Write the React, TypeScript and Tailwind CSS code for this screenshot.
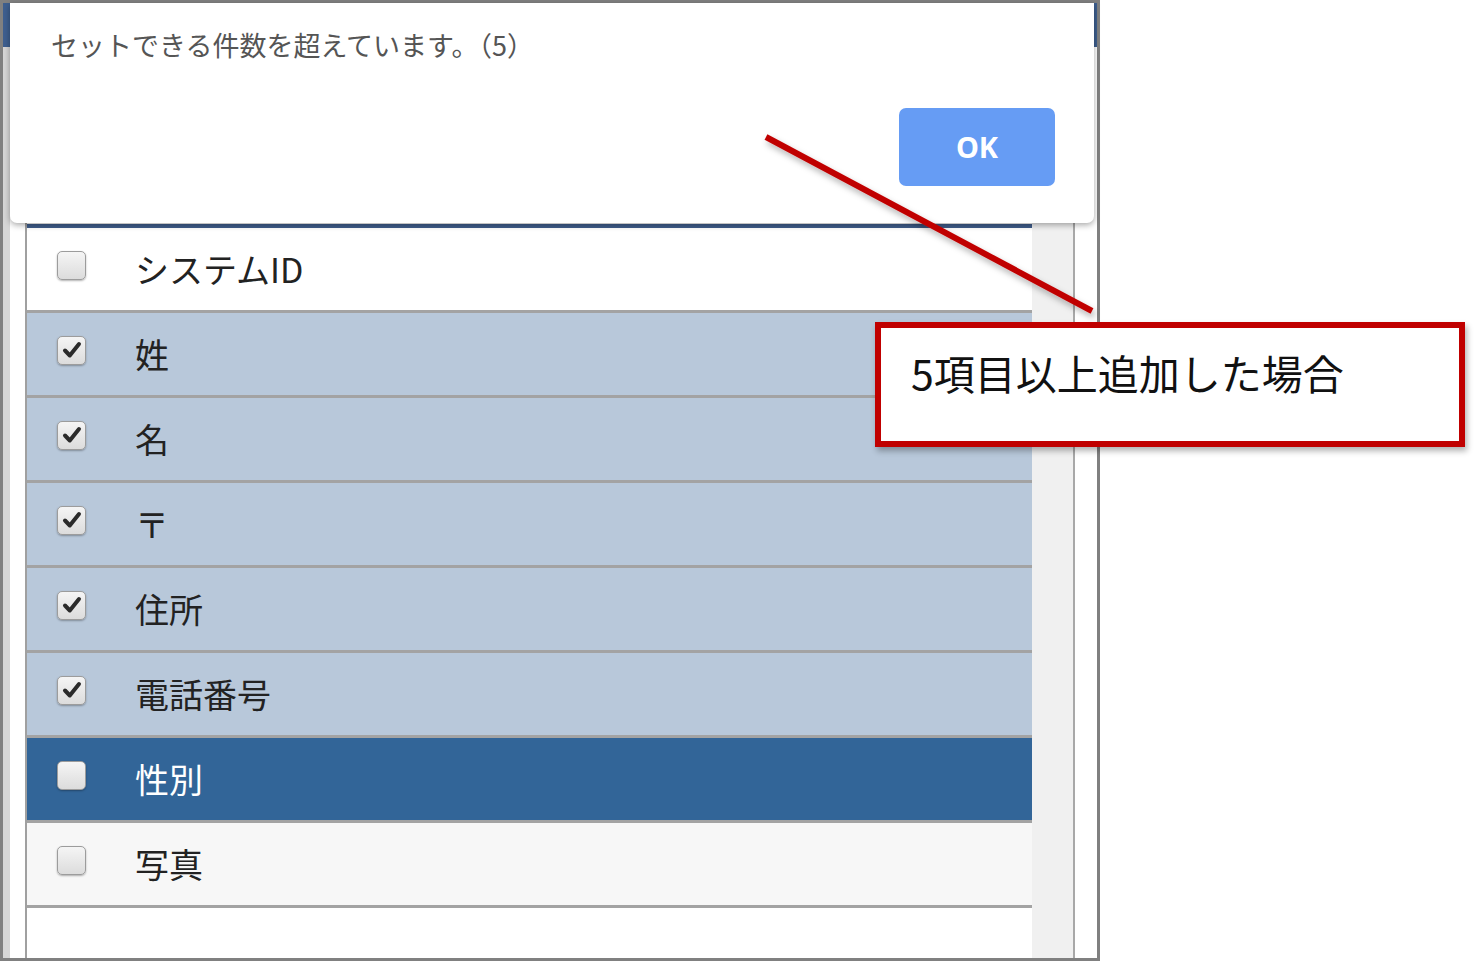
const ROWS = [
  { label: "システムID", checked: false, tone: "white" },
  { label: "姓", checked: true, tone: "picked" },
  { label: "名", checked: true, tone: "picked" },
  { label: "〒", checked: true, tone: "picked" },
  { label: "住所", checked: true, tone: "picked" },
  { label: "電話番号", checked: true, tone: "picked" },
  { label: "性別", checked: false, tone: "active" },
  { label: "写真", checked: false, tone: "plain" },
];

const jp = "font-['Meiryo','Noto_Sans_CJK_JP',sans-serif]";

function CheckBox({ checked }: { checked: boolean }) {
  return (
    <div className="w-[29px] h-[29px] rounded-[5px] border border-[#9c9c9c] bg-gradient-to-b from-[#f5f5f5] to-[#dcdcdc] shadow-[0_1px_2px_rgba(0,0,0,0.3)] flex items-center justify-center">
      {checked && (
        <svg width="22" height="22" viewBox="0 0 22 22">
          <path d="M4 11.5 L8.8 16.5 L18 5" fill="none" stroke="#2b2b2b" strokeWidth="4" strokeLinecap="round" strokeLinejoin="round" />
        </svg>
      )}
    </div>
  );
}

function Row({ label, checked, tone }: { label: string; checked: boolean; tone: string }) {
  const bg =
    tone === "white" ? "bg-white" : tone === "picked" ? "bg-[#b8c8da]" : tone === "active" ? "bg-[#326598]" : "bg-[#f7f7f7]";
  const color = tone === "active" ? "text-white" : "text-[#222]";
  return (
    <div className={`h-[85px] shrink-0 border-b-[3px] border-[#a3a3a3] flex items-center ${bg}`}>
      <div className="pl-[30px] mb-[8px]">
        <CheckBox checked={checked} />
      </div>
      <span className={`ml-[49px] text-[34px] leading-none ${color} ${jp}`}>{label}</span>
    </div>
  );
}

export default function App() {
  return (
    <div className="relative w-[1480px] h-[962px] bg-white overflow-hidden">
      {/* window frame with the list behind the dialog */}
      <div className="w-[1100px] h-[961px] border-[3px] border-[#808080] flex bg-white">
        <div className="w-[7px] bg-[#d6d6d6] flex flex-col">
          <div className="h-[44px] bg-[#3e5f8f]" />
        </div>
        <div className="w-[15px] bg-white" />
        <div className="w-[1007px] border-l-2 border-[#a0a0a0] flex flex-col">
          <div className="h-[225px] shrink-0 border-b-[4px] border-[#3f5d8a] bg-white" />
          {ROWS.map((r) => (
            <Row key={r.label} label={r.label} checked={r.checked} tone={r.tone} />
          ))}
        </div>
        <div className="w-[41px] bg-[#f0f0f0]" />
        <div className="w-[2px] bg-[#a8a8a8]" />
        <div className="flex-1 bg-white flex justify-end">
          <div className="w-[3px] flex flex-col">
            <div className="h-[44px] bg-[#3e5f8f]" />
          </div>
        </div>
      </div>

      {/* alert dialog */}
      <div className="absolute left-[10px] top-[3px] w-[1084px] h-[220px] bg-white rounded-b-[7px] shadow-[0_2px_6px_rgba(0,0,0,0.35)] flex flex-col justify-between pl-[41px] pr-[39px] pt-[25px] pb-[37px]">
        <p className={`text-[27px] leading-[34px] text-[#555] ${jp}`}>セットできる件数を超えています。（5）</p>
        <div className="flex justify-end">
          <button className="w-[156px] h-[78px] rounded-[7px] bg-[#669cf4] text-white text-[29px] font-bold font-['Noto_Sans',sans-serif]">
            OK
          </button>
        </div>
      </div>

      {/* annotation line */}
      <svg className="absolute left-0 top-0" width="1480" height="962">
        <defs>
          <filter id="sh" x="-10%" y="-10%" width="120%" height="130%">
            <feDropShadow dx="2" dy="4" stdDeviation="3" floodColor="#000" floodOpacity="0.3" />
          </filter>
        </defs>
        <line x1="766" y1="137" x2="1092" y2="311" stroke="#c00000" strokeWidth="6" filter="url(#sh)" />
      </svg>

      {/* annotation callout */}
      <div className="absolute left-[875px] top-[322px] w-[590px] h-[125px] border-[6px] border-[#c00000] bg-white shadow-[2px_4px_6px_rgba(0,0,0,0.3)] pl-[30px] pt-[19px]">
        <span className={`text-[41px] leading-[50px] text-[#111] ${jp}`}>5項目以上追加した場合</span>
      </div>
    </div>
  );
}
